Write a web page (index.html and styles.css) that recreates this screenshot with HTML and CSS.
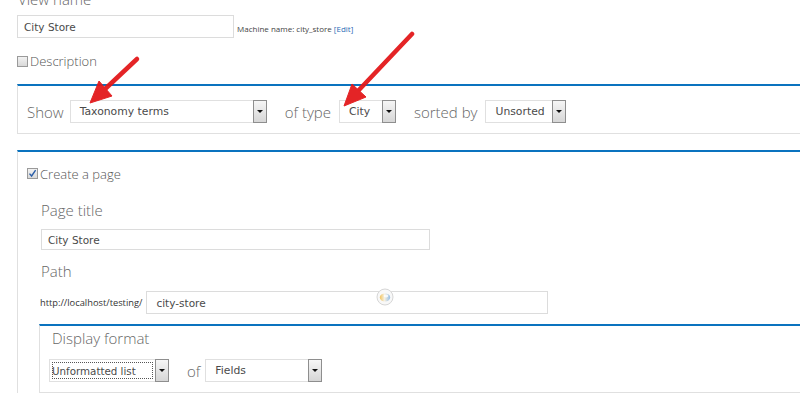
FILE: index.html
```html
<html>
  <head>
    <title>Add view</title>
    <meta name="viewport" content="width=device-width, initial-scale=1.0">
    <link rel="stylesheet" href="styles.css">
  </head>
  <body>
    <div class="page">
      <div class="big-label view-name-label">View name</div>
      <div class="name-row">
        <div class="text-input name-input">City Store</div>
        <span class="machine-name">Machine name: city_store <a href="#">[Edit]</a></span>
      </div>
      <div class="check-row description-row">
        <span class="checkbox"></span>
        <span>Description</span>
      </div>

      <div class="box show-box">
        <span class="inline-label first">Show</span>
        <div class="select select-base"><span class="select-text">Taxonomy terms</span><span class="select-button"></span></div>
        <span class="inline-label type-label">of type</span>
        <div class="select select-type"><span class="select-text">City</span><span class="select-button"></span></div>
        <span class="inline-label sort-label">sorted by</span>
        <div class="select select-sort"><span class="select-text">Unsorted</span><span class="select-button"></span></div>
      </div>

      <div class="box page-box">
        <div class="check-row create-row">
          <span class="checkbox checked">
            <svg width="9" height="9" viewBox="0 0 9 9"><path d="M1.5 4.6 L3.6 7 L7.6 1.2" fill="none" stroke="#2a5ea8" stroke-width="1.4"/></svg>
          </span>
          <span>Create a page</span>
        </div>
        <div class="indent">
          <div class="big-label page-title-label">Page title</div>
          <div class="text-input title-input">City Store</div>
          <div class="big-label path-label">Path</div>
          <div class="path-row">
            <span class="path-prefix">http://localhost/testing/</span>
            <div class="text-input path-input">city-store</div>
          </div>
          <div class="box display-box">
            <div class="big-label display-label">Display format</div>
            <div class="display-row">
              <div class="select select-style"><span class="select-text focused">Unformatted list</span><span class="select-button"></span></div>
              <span class="inline-label of-label">of</span>
              <div class="select select-row"><span class="select-text">Fields</span><span class="select-button"></span></div>
            </div>
          </div>
        </div>
      </div>
    </div>

    <svg class="throbber" width="18" height="18" viewBox="0 0 18 18">
      <defs>
        <linearGradient id="glow" x1="0" y1="0" x2="1" y2="0">
          <stop offset="0" stop-color="#f1c460"/>
          <stop offset="0.45" stop-color="#f6f0e0"/>
          <stop offset="1" stop-color="#93bde6"/>
        </linearGradient>
      </defs>
      <circle cx="9" cy="9" r="8" fill="#f8f8f8" stroke="#d6d6d6"/>
      <ellipse cx="9" cy="9.4" rx="5.2" ry="4" fill="url(#glow)"/>
      <ellipse cx="10" cy="8" rx="2.4" ry="1.4" fill="#ffffff" opacity="0.8"/>
    </svg>

    <svg class="arrows" width="800" height="393" viewBox="0 0 800 393">
      <g fill="#e3191b" stroke="#e3191b" opacity="0.95">
        <line x1="137" y1="59" x2="104" y2="90" stroke-width="4.5" stroke-linecap="round"/>
        <polygon points="90,103 112,96 99,81" stroke-width="1" stroke-linejoin="round"/>
        <line x1="412" y1="34" x2="358" y2="91" stroke-width="4.5" stroke-linecap="round"/>
        <polygon points="344,106 366,97 352,84" stroke-width="1" stroke-linejoin="round"/>
      </g>
    </svg>
  </body>
</html>
```

FILE: styles.css
```css
body {
  margin: 0;
  padding: 0;
  position: relative;
  background: #fff;
  color: #666;
  font-family: "Open Sans", Arial, sans-serif;
  overflow: hidden;
  height: 393px;
}

.page {
  padding-left: 17px;
}

.big-label {
  font-size: 15px;
  font-weight: 300;
  line-height: 20px;
  color: #666;
}

.view-name-label {
  margin-top: -11px;
  margin-bottom: 6px;
  margin-left: 1px;
}

.text-input {
  box-sizing: border-box;
  border: 1px solid #dcdcdc;
  background: #fff;
  font-family: "DejaVu Sans", Verdana, sans-serif;
  font-size: 10.5px;
  color: #4a4a4a;
  display: flex;
  align-items: center;
  padding-left: 6px;
}

.name-row {
  display: flex;
  align-items: center;
}

.name-input {
  width: 217px;
  height: 23px;
}

.machine-name {
  font-size: 8px;
  color: #444;
  margin-left: 3px;
  margin-top: 3px;
}

.machine-name a {
  color: #2a6bb5;
  text-decoration: none;
}

.check-row {
  display: flex;
  align-items: center;
  font-size: 13px;
  font-weight: 300;
  color: #555;
}

.description-row {
  margin-top: 14px;
}

.checkbox {
  box-sizing: border-box;
  width: 11px;
  height: 11px;
  border: 1px solid #9a9a9a;
  background: linear-gradient(#f2f2f2, #d9d9d9);
  margin-right: 2px;
  display: flex;
  align-items: center;
  justify-content: center;
}

.box {
  border-top: 2px solid #0a73bf;
  border-left: 1px solid #e0e0e0;
  border-bottom: 1px solid #e0e0e0;
}

.show-box {
  margin-top: 14px;
  padding: 14px 0 10px 9px;
  display: flex;
  align-items: center;
}

.inline-label {
  font-size: 15px;
  font-weight: 300;
  color: #666;
  margin: 0 5px 0 18px;
  line-height: 20px;
}

.inline-label.first {
  margin-left: 0;
  margin-right: 6px;
}

.type-label {
  margin-right: 8px;
}

.sort-label {
  margin-right: 8px;
}

.select {
  box-sizing: border-box;
  height: 23px;
  display: flex;
  align-items: stretch;
  border: 1px solid #e0e0e0;
  background: #fff;
}

.select-text {
  flex: 1;
  display: flex;
  align-items: center;
  padding-left: 9px;
  font-family: "DejaVu Sans", Verdana, sans-serif;
  font-size: 10.8px;
  color: #4a4a4a;
}

.select-button {
  box-sizing: border-box;
  width: 14px;
  margin: -1px -1px -1px 0;
  border: 1px solid #8e8e8e;
  background: linear-gradient(#f6f6f6, #d6d6d6);
  position: relative;
}

.select-button::after {
  content: "";
  position: absolute;
  left: 3px;
  top: 9px;
  border-left: 3px solid transparent;
  border-right: 3px solid transparent;
  border-top: 3px solid #111;
}

.select-base {
  width: 197px;
}

.select-type {
  width: 57px;
}

.select-sort {
  width: 81px;
}

.page-box {
  margin-top: 16px;
  padding: 15px 0 0 9px;
}

.create-row {
  height: 13px;
}

.indent {
  margin-left: 14px;
}

.page-title-label {
  margin-top: 20px;
}

.title-input {
  width: 389px;
  height: 21px;
  margin-top: 9px;
}

.path-label {
  margin-top: 11px;
}

.path-row {
  display: flex;
  align-items: center;
  margin-top: 10px;
  margin-left: -1px;
}

.path-prefix {
  font-size: 9.3px;
  color: #333;
  margin-right: 4px;
}

.path-input {
  width: 402px;
  height: 23px;
  padding-left: 9px;
}

.display-box {
  margin-top: 10px;
  margin-left: -2px;
  padding: 2px 0 10px 12px;
}

.display-row {
  display: flex;
  align-items: center;
  margin-top: 11px;
  margin-left: -3px;
}

.select-style {
  width: 120px;
}

.select-style .select-text {
  padding-left: 2px;
  font-size: 10.3px;
}

.select-text.focused {
  outline: 1px dotted #555;
  outline-offset: -3px;
}

.of-label {
  margin: 0 5px 0 18px;
}

.select-row {
  width: 117px;
}

.throbber {
  position: absolute;
  left: 376px;
  top: 288px;
}

.arrows {
  position: absolute;
  left: 0;
  top: 0;
  pointer-events: none;
}
```
